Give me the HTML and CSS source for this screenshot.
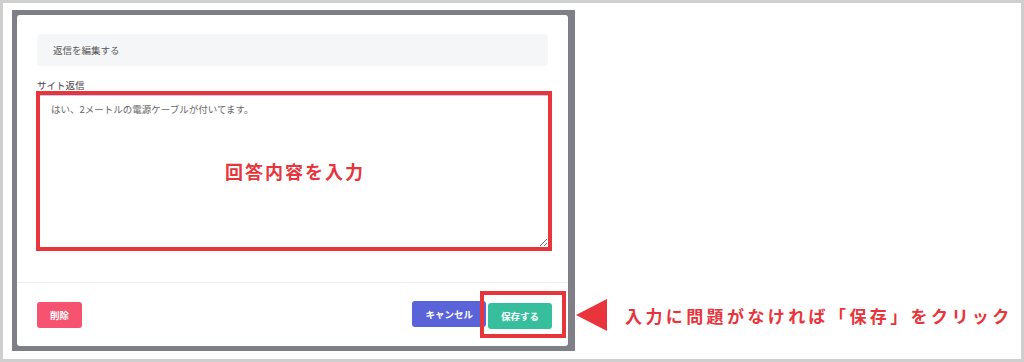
FILE: index.html
```html
<!DOCTYPE html>
<html lang="ja">
<head>
  <meta charset="UTF-8" />
  <meta name="viewport" content="width=device-width, initial-scale=1.0"/>
  <title>返信を編集する</title>
  <link rel="stylesheet" href="styles.css">
</head>
<body>
  <div class="frame">
    <div class="backdrop">
      <div class="modal">
        <div class="modal-body">
          <div class="modal-title">返信を編集する</div>
          <label class="field-label" for="reply">サイト返信</label>
          <div class="mark-box">
            <textarea id="reply">はい、2メートルの電源ケーブルが付いてます。</textarea>
            <div class="mark-text">回答内容を入力</div>
          </div>
        </div>
        <div class="modal-footer">
          <button class="btn btn-delete">削除</button>
          <div class="acoes">
            <button class="btn btn-cancel">キャンセル</button>
            <span class="save-wrap">
              <button class="btn btn-save">保存する</button>
            </span>
          </div>
        </div>
      </div>
    </div>

    <div class="callout">
      <span class="arrow"></span>
      <span class="callout-text">入力に問題がなければ「保存」をクリック</span>
    </div>
  </div>
</body>
</html>
```

FILE: styles.css
```css
body {
  margin: 0;
  padding: 0;
  font-family: 'Noto Sans CJK JP', 'Noto Sans', sans-serif;
  background: #fff;
}

.frame {
  width: 1024px;
  height: 362px;
  box-sizing: border-box;
  border: 3px solid #cfcfcf;
  padding: 7px 0 0 9px;
  display: flex;
  align-items: flex-start;
}

.backdrop {
  width: 563px;
  height: 341px;
  box-sizing: border-box;
  padding: 5px 7px 5px 5px;
  background: #7f7f87;
}

.modal {
  height: 100%;
  background: #fff;
  border-radius: 3px;
  display: flex;
  flex-direction: column;
}

.modal-body {
  flex: 1;
  padding: 19px 20px 0 20px;
}

.modal-title {
  height: 32px;
  background: #f5f6f8;
  border-radius: 3px;
  padding-left: 16px;
  font-size: 9.5px;
  line-height: 32px;
  color: #555;
}

.field-label {
  display: block;
  margin-top: 13px;
  font-size: 9.5px;
  line-height: 13px;
  color: #444;
}

.mark-box {
  position: relative;
  height: 160px;
  margin: -1px -4px 0 -1px;
  box-sizing: border-box;
  border: 4px solid #e8343b;
}

.mark-box textarea {
  display: block;
  width: 100%;
  height: 100%;
  box-sizing: border-box;
  border: none;
  border-top: 1px solid #c5c8f4;
  padding: 6px 11px;
  font-family: 'Noto Sans CJK JP', sans-serif;
  font-size: 9.5px;
  line-height: 14px;
  color: #666;
  outline: none;
}

.mark-text {
  position: absolute;
  inset: 0;
  display: flex;
  justify-content: center;
  align-items: center;
  padding-left: 2px;
  font-size: 18px;
  font-weight: bold;
  letter-spacing: 2px;
  color: #e8343b;
  pointer-events: none;
}

.modal-footer {
  border-top: 1px solid #eeeff2;
  padding: 18px 16px 17px 20px;
  display: flex;
  justify-content: space-between;
  align-items: center;
}

.acoes {
  display: flex;
  gap: 2px;
}

.btn {
  height: 26px;
  padding: 0 13px;
  border: none;
  border-radius: 3px;
  color: #fff;
  font-family: 'Noto Sans CJK JP', sans-serif;
  font-size: 9.5px;
  font-weight: bold;
  white-space: nowrap;
  cursor: pointer;
}

.btn-delete {
  background-color: #f5536f;
}

.btn-cancel {
  background-color: #5b63d9;
}

.btn-save {
  background-color: #37bf9d;
}

.save-wrap {
  position: relative;
  display: block;
}

.save-wrap::after {
  content: '';
  position: absolute;
  top: -10px;
  left: -8px;
  right: -14px;
  bottom: -9px;
  border: 4px solid #e8343b;
}

.callout {
  margin-top: 289px;
  margin-left: 1px;
  display: flex;
  align-items: center;
}

.arrow {
  width: 0;
  height: 0;
  border-top: 16.5px solid transparent;
  border-bottom: 16.5px solid transparent;
  border-right: 31px solid #e8343b;
}

.callout-text {
  margin-left: 18px;
  font-size: 17px;
  font-weight: bold;
  letter-spacing: 3.4px;
  color: #e8343b;
  white-space: nowrap;
}
```
